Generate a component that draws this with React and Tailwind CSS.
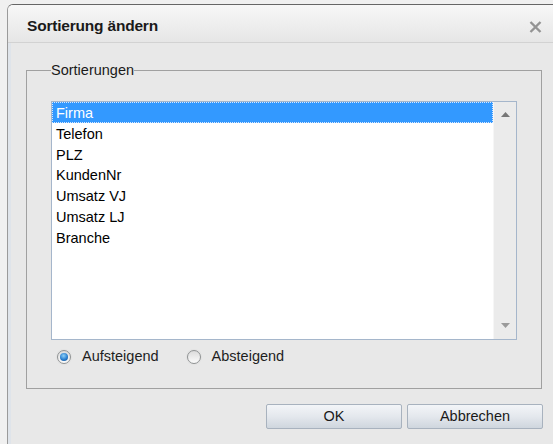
import React from "react";

const sortFields = ["Firma", "Telefon", "PLZ", "KundenNr", "Umsatz VJ", "Umsatz LJ", "Branche"];

const Arrow = ({ up, color }) => (
  <svg width="9" height="5" viewBox="0 0 9 5">
    <polygon points={up ? "0,5 4.5,0 9,5" : "0,0 9,0 4.5,5"} fill={color} />
  </svg>
);

const Radio = ({ checked }) => (
  <span className="flex h-[14px] w-[14px] shrink-0 items-center justify-center rounded-full border border-[#8f9293] bg-linear-to-b from-[#dcdcdc] to-[#fbfbfb] shadow-[0_0_0_1px_#e2e2e2]">
    {checked && (
      <span className="h-[8px] w-[8px] rounded-full bg-[radial-gradient(circle_at_45%_35%,#8fd0f7,#2a7fcf_55%,#134c8c)]" />
    )}
  </span>
);

const Button = ({ label }) => (
  <button className="h-[25px] w-[136px] rounded-[2px] border border-[#a8b2be] bg-linear-to-b from-[#f3f5f8] via-[#e4e8ed] to-[#cfd6de] text-[14.5px] text-[#1a1a1a]">
    {label}
  </button>
);

export default function App() {
  const selected = "Firma";

  return (
    <div className="h-[444px] w-[553px] overflow-hidden bg-[#f0f0f0] pl-[7px] pt-[4px] font-['Liberation_Sans',Arial,sans-serif]">
      <div className="flex h-full flex-col rounded-tl-[6px] border-l border-t border-l-[#9a9a9a] border-t-[#666] bg-[#e8e8e8]">
        {/* title bar */}
        <div className="flex h-[38px] items-center justify-between rounded-tl-[5px] border-b border-[#d2d2d2] bg-linear-to-b from-[#f7f7f7] to-[#e6e6e6] pl-[19px] pr-[11px] pt-[4px]">
          <span className="text-[15.5px] font-bold leading-[18px] tracking-[-0.2px] text-[#1a1a1a]">Sortierung ändern</span>
          <svg width="13" height="12" viewBox="0 0 13 12" className="mt-[2px]">
            <path d="M1.5 1 L11.5 11 M11.5 1 L1.5 11" stroke="#949494" strokeWidth="2.4" />
          </svg>
        </div>

        <div className="flex flex-1 flex-col border-l-[3px] border-[#dfe4ea]">
          <fieldset className="ml-[15px] mr-[11px] mt-[19px] border border-[#a0a0a0] px-[24px] pb-[22px]">
            <legend className="px-0 text-[14.5px] leading-[16px] text-[#1a1a1a]">Sortierungen</legend>

            {/* list of sort fields */}
            <div className="mt-[23px] flex h-[239px] border border-[#a5b6cb] bg-white">
              <ul className="flex-1 text-[14.5px] text-black">
                {sortFields.map((field) =>
                  field === selected ? (
                    <li
                      key={field}
                      className="h-[20.8px] bg-[#3399ff] pl-[4px] leading-[22.4px] text-white outline-1 -outline-offset-1 outline-dotted outline-[#d8e8ff]"
                    >
                      {field}
                    </li>
                  ) : (
                    <li key={field} className="h-[20.8px] pl-[4px] leading-[22.4px]">
                      {field}
                    </li>
                  )
                )}
              </ul>
              <div className="flex w-[23px] flex-col items-center justify-between border-l border-[#f6f6f6] bg-[#ebebeb] pb-[11px] pt-[10px]">
                <Arrow up color="#777" />
                <Arrow color="#9a9a9a" />
              </div>
            </div>

            {/* sort direction */}
            <div className="mt-[8px] flex h-[18px] items-center pl-[6px] text-[14.5px] text-[#1e1e1e]">
              <Radio checked />
              <span className="ml-[11px]">Aufsteigend</span>
              <span className="ml-[28px]">
                <Radio />
              </span>
              <span className="ml-[11px]">Absteigend</span>
            </div>
          </fieldset>

          <div className="mt-[15px] flex justify-end gap-[5px] pr-[10px]">
            <Button label="OK" />
            <Button label="Abbrechen" />
          </div>
        </div>
      </div>
    </div>
  );
}
